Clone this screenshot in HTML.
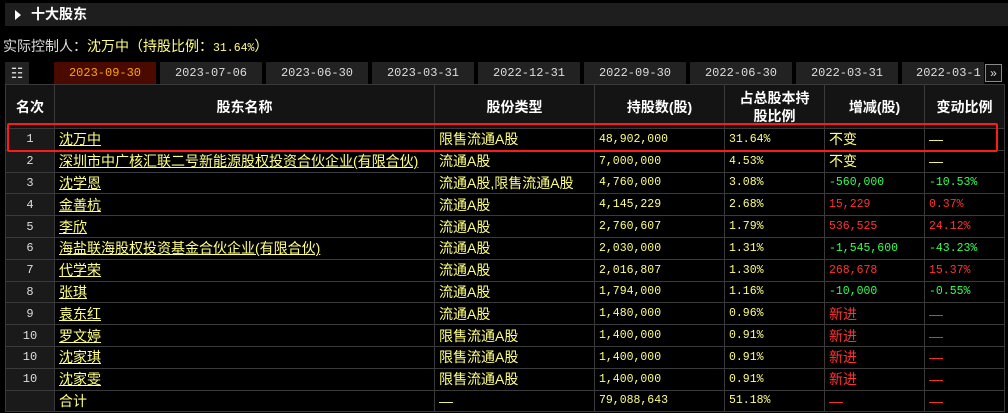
<!DOCTYPE html><html><head><meta charset="utf-8"><style>
*{margin:0;padding:0;box-sizing:border-box}
body{width:1008px;height:413px;background:#000;font-family:"Liberation Sans","Noto Sans CJK SC",sans-serif;font-size:14px;color:#ffff80;position:relative;overflow:hidden}
.title{position:absolute;left:5px;top:3px;width:1003px;height:23px;background:#1e1e1e;color:#fff;font-weight:bold;font-size:14px;line-height:23px;padding-left:12px}
.title:before{content:"";position:absolute;left:10px;top:7px;border-left:6px solid #fff;border-top:5px solid transparent;border-bottom:5px solid transparent}
.title span{margin-left:14px}
.ctl{position:absolute;left:3px;top:36px;color:#ddd;font-size:14px}
.ctl b{font-weight:normal;color:#ffff80}
.m{font-family:"Liberation Mono",monospace;font-size:11.5px}
.tab{position:absolute;top:62px;height:22px;width:102px;background:#222;color:#ddd;text-align:center;line-height:22px;font-family:"Liberation Mono",monospace;font-size:12px}
.tab.on{background:#4a0a00;color:#ffa500}
table{position:absolute;left:5px;top:84px;width:999px;border-collapse:collapse;table-layout:fixed}
td,th{border:1px solid #3a3a3a;height:21.8px;padding:0 4px;white-space:nowrap;overflow:hidden;font-weight:normal}
td.n{font-family:"Liberation Mono",monospace;font-size:11.5px}
th{height:44px;background:#141414;color:#fff;font-weight:bold;font-size:14px;line-height:18px}
td.r{background:#1a1a1a;color:#ddd;text-align:center;font-family:"Liberation Mono",monospace;font-size:12px}
td u{text-decoration:underline}
.g{color:#33ff55}.d{color:#ff3333}
.box{position:absolute;left:7px;top:123px;width:991px;height:29px;border:2px solid #ff1a1a;border-radius:2px}
</style></head><body>
<div class="title"><span>十大股东</span></div>
<div class="ctl">实际控制人：<b>沈万中（持股比例：<span class="m">31.64%</span>）</b></div>
<div style="position:absolute;left:5px;top:62px;width:24px;height:22px;background:#222;color:#ddd;text-align:center;line-height:22px;font-size:14px">☷</div>
<div class="tab on" style="left:54px">2023-09-30</div>
<div class="tab" style="left:160px">2023-07-06</div>
<div class="tab" style="left:266px">2023-06-30</div>
<div class="tab" style="left:372px">2023-03-31</div>
<div class="tab" style="left:478px">2022-12-31</div>
<div class="tab" style="left:584px">2022-09-30</div>
<div class="tab" style="left:690px">2022-06-30</div>
<div class="tab" style="left:796px">2022-03-31</div>
<div class="tab" style="left:902px;width:82px;text-align:left;padding-left:14px">2022-03-1</div>
<div style="position:absolute;left:985px;top:64px;width:17px;height:18px;border:1px solid #888;background:#111;color:#ddd;font-size:12px;line-height:16px;text-align:center">»</div>
<table>
<colgroup><col style="width:49px"><col style="width:380px"><col style="width:160px"><col style="width:130px"><col style="width:100px"><col style="width:100px"><col style="width:80px"></colgroup>
<tr><th>名次</th><th>股东名称</th><th>股份类型</th><th>持股数(股)</th><th>占总股本持<br>股比例</th><th>增减(股)</th><th>变动比例</th></tr>
<tr><td class="r">1</td><td><u>沈万中</u></td><td>限售流通A股</td><td class="n">48,902,000</td><td class="n">31.64%</td><td>不变</td><td>—</td></tr>
<tr><td class="r">2</td><td><u>深圳市中广核汇联二号新能源股权投资合伙企业(有限合伙)</u></td><td>流通A股</td><td class="n">7,000,000</td><td class="n">4.53%</td><td>不变</td><td>—</td></tr>
<tr><td class="r">3</td><td><u>沈学恩</u></td><td>流通A股,限售流通A股</td><td class="n">4,760,000</td><td class="n">3.08%</td><td class="n g">-560,000</td><td class="n g">-10.53%</td></tr>
<tr><td class="r">4</td><td><u>金善杭</u></td><td>流通A股</td><td class="n">4,145,229</td><td class="n">2.68%</td><td class="n d">15,229</td><td class="n d">0.37%</td></tr>
<tr><td class="r">5</td><td><u>李欣</u></td><td>流通A股</td><td class="n">2,760,607</td><td class="n">1.79%</td><td class="n d">536,525</td><td class="n d">24.12%</td></tr>
<tr><td class="r">6</td><td><u>海盐联海股权投资基金合伙企业(有限合伙)</u></td><td>流通A股</td><td class="n">2,030,000</td><td class="n">1.31%</td><td class="n g">-1,545,600</td><td class="n g">-43.23%</td></tr>
<tr><td class="r">7</td><td><u>代学荣</u></td><td>流通A股</td><td class="n">2,016,807</td><td class="n">1.30%</td><td class="n d">268,678</td><td class="n d">15.37%</td></tr>
<tr><td class="r">8</td><td><u>张琪</u></td><td>流通A股</td><td class="n">1,794,000</td><td class="n">1.16%</td><td class="n g">-10,000</td><td class="n g">-0.55%</td></tr>
<tr><td class="r">9</td><td><u>袁东红</u></td><td>流通A股</td><td class="n">1,480,000</td><td class="n">0.96%</td><td class="d">新进</td><td class="d">—</td></tr>
<tr><td class="r">10</td><td><u>罗文婷</u></td><td>限售流通A股</td><td class="n">1,400,000</td><td class="n">0.91%</td><td class="d">新进</td><td class="d">—</td></tr>
<tr><td class="r">10</td><td><u>沈家琪</u></td><td>限售流通A股</td><td class="n">1,400,000</td><td class="n">0.91%</td><td class="d">新进</td><td class="d">—</td></tr>
<tr><td class="r">10</td><td><u>沈家雯</u></td><td>限售流通A股</td><td class="n">1,400,000</td><td class="n">0.91%</td><td class="d">新进</td><td class="d">—</td></tr>
<tr><td class="r"></td><td>合计</td><td>—</td><td class="n">79,088,643</td><td class="n">51.18%</td><td class="d">—</td><td class="d">—</td></tr>
</table>
<div class="box"></div>
</body></html>
